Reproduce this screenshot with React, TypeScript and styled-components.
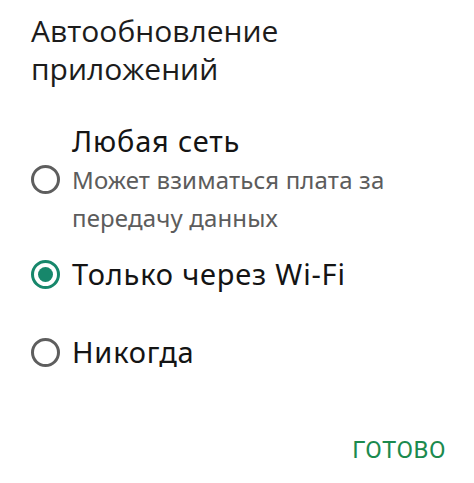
import React, { useState } from 'react';
import styled, { createGlobalStyle } from 'styled-components';

const GlobalStyle = createGlobalStyle`
  html, body {
    margin: 0;
    padding: 0;
    background: #ffffff;
  }
  * {
    box-sizing: border-box;
  }
`;

const Dialog = styled.div`
  width: 474px;
  height: 483px;
  background: #ffffff;
  display: flex;
  flex-direction: column;
  padding: 12px 28px 0 31px;
`;

const Title = styled.h1`
  margin: 0;
  font-family: 'Open Sans', 'Noto Sans', sans-serif;
  font-weight: 400;
  font-size: 30px;
  line-height: 38px;
  color: #1c1c1c;
`;

const OptionList = styled.div`
  display: flex;
  flex-direction: column;
  margin-top: 34px;
`;

const OptionRow = styled.label<{ $gap: number }>`
  display: flex;
  align-items: center;
  gap: 12px;
  margin-bottom: ${(p) => p.$gap}px;
  cursor: pointer;
`;

const Radio = styled.span<{ $checked: boolean }>`
  flex: none;
  width: 29px;
  height: 29px;
  border-radius: 50%;
  border: 3px solid ${(p) => (p.$checked ? '#17876b' : '#5e5e5e')};
  display: flex;
  align-items: center;
  justify-content: center;

  &::after {
    content: '';
    width: 15px;
    height: 15px;
    border-radius: 50%;
    background: #17876b;
    display: ${(p) => (p.$checked ? 'block' : 'none')};
  }
`;

const OptionText = styled.div`
  display: flex;
  flex-direction: column;
  font-family: 'Noto Sans', 'Open Sans', sans-serif;
`;

const Label = styled.span`
  font-size: 29px;
  line-height: 38px;
  letter-spacing: 0.8px;
  color: #141414;
`;

const Hint = styled.span`
  margin-top: 1px;
  font-size: 24px;
  line-height: 38px;
  letter-spacing: 0.15px;
  color: #5c5c5c;
`;

const Footer = styled.div`
  display: flex;
  justify-content: flex-end;
  margin-top: auto;
  padding-bottom: 18px;
`;

const DoneButton = styled.button`
  border: none;
  background: none;
  padding: 0;
  font-family: Roboto, 'Noto Sans', sans-serif;
  font-size: 24px;
  line-height: 30px;
  letter-spacing: 0.5px;
  color: #1b8a4e;
  cursor: pointer;
`;

type Option = { id: string; label: string; hint?: boolean; gap: number };

const options: Option[] = [
  { id: 'any', label: 'Любая сеть', hint: true, gap: 18 },
  { id: 'wifi', label: 'Только через Wi-Fi', gap: 40 },
  { id: 'never', label: 'Никогда', gap: 0 },
];

export default function App() {
  const [value, setValue] = useState('wifi');

  return (
    <>
      <GlobalStyle />
      <Dialog>
        <Title>
          Автообновление
          <br />
          приложений
        </Title>
        <OptionList>
          {options.map((o) => (
            <OptionRow key={o.id} $gap={o.gap} onClick={() => setValue(o.id)}>
              <Radio $checked={value === o.id} />
              <OptionText>
                <Label>{o.label}</Label>
                {o.hint && (
                  <Hint>
                    Может взиматься плата за
                    <br />
                    передачу данных
                  </Hint>
                )}
              </OptionText>
            </OptionRow>
          ))}
        </OptionList>
        <Footer>
          <DoneButton>ГОТОВО</DoneButton>
        </Footer>
      </Dialog>
    </>
  );
}
